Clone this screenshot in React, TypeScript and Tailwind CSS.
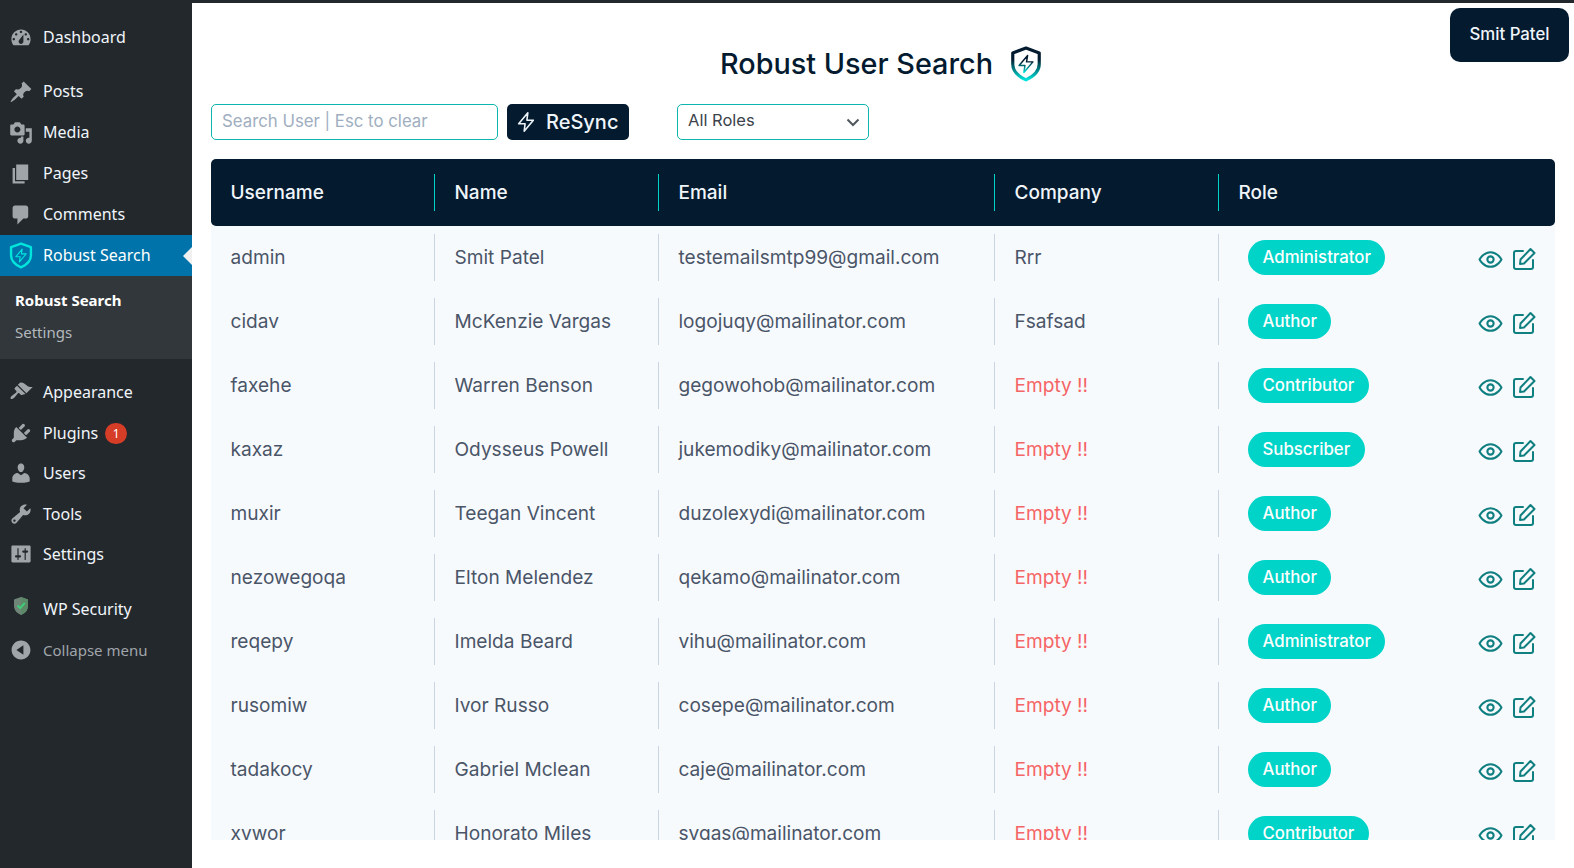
import React from 'react';

const DASHICONS: Record<string, string> = {
  dashboard:
    'M3.76 16h12.48c1.1-1.37 1.76-3.11 1.76-5 0-4.42-3.58-8-8-8s-8 3.58-8 8c0 1.89.66 3.63 1.76 5zM10 4c.55 0 1 .45 1 1s-.45 1-1 1-1-.45-1-1 .45-1 1-1zM6 6c.55 0 1 .45 1 1s-.45 1-1 1-1-.45-1-1 .45-1 1-1zm8 0c.55 0 1 .45 1 1s-.45 1-1 1-1-.45-1-1 .45-1 1-1zm-5.37 5.55L12 7v6c0 1.1-.9 2-2 2s-2-.9-2-2c0-.57.24-1.08.63-1.45zM4 10c.55 0 1 .45 1 1s-.45 1-1 1-1-.45-1-1 .45-1 1-1zm12 0c.55 0 1 .45 1 1s-.45 1-1 1-1-.45-1-1 .45-1 1-1z',
  pin: 'M10.44 3.02l1.82-1.82 6.36 6.35-1.83 1.82c-1.05-.68-2.48-.57-3.41.36l-.75.75c-.92.93-1.04 2.35-.35 3.41l-1.83 1.82-2.41-2.41-2.8 2.79c-.42.42-3.38 2.71-3.8 2.29s1.86-3.39 2.28-3.81l2.79-2.79L4.1 9.36l1.83-1.82c1.05.69 2.48.57 3.4-.36l.75-.75c.93-.92 1.05-2.35.36-3.41z',
  media:
    'M13 11V4c0-.55-.45-1-1-1h-1.67L9 1H5L3.67 3H2c-.55 0-1 .45-1 1v7c0 .55.45 1 1 1h10c.55 0 1-.45 1-1zM7 4.5c1.38 0 2.5 1.12 2.5 2.5S8.38 9.5 7 9.5 4.5 8.38 4.5 7 5.62 4.5 7 4.5zM14 6h5v10.5c0 1.38-1.12 2.5-2.5 2.5S14 17.88 14 16.5s1.12-2.5 2.5-2.5c.17 0 .34.02.5.05V9h-3V6zm-4 8.05V13h2v3.5c0 1.38-1.12 2.5-2.5 2.5S7 17.88 7 16.5 8.12 14 9.5 14c.17 0 .34.02.5.05z',
  page: 'M6 15V2h10v13H6zm-1 1h8v2H3V5h2v11z',
  comments: 'M5 2h9c1.1 0 2 .9 2 2v7c0 1.1-.9 2-2 2h-2l-5 5v-5H5c-1.1 0-2-.9-2-2V4c0-1.1.9-2 2-2z',
  appearance:
    'M14.48 11.06L7.41 3.99l1.5-1.5c.5-.56 2.3-.47 3.51.32 1.21.8 1.43 1.28 2.91 2.1 1.18.64 2.45 1.26 4.45.85zm-.71.71L6.7 4.7 4.93 6.47c-.39.39-.39 1.02 0 1.41l1.06 1.06c.39.39.39 1.03 0 1.42-.6.6-1.43 1.11-2.21 1.69-.35.26-.7.53-1.01.84C1.43 13.71.96 15.12 1.5 15.66c.54.54 1.95.07 3.29-1.27.31-.31.58-.66.84-1.01.58-.78 1.09-1.61 1.69-2.21.39-.39 1.03-.39 1.42 0l1.06 1.06c.39.39 1.02.39 1.41 0z',
  plugins:
    'M13.11 4.36L9.87 7.6 8 5.73l3.24-3.24c.35-.34 1.05-.2 1.56.32.52.51.66 1.21.31 1.55zm-8 1.77l.91-1.12 9.01 9.01-1.19.84c-.71.71-2.63 1.16-3.82 1.16H6.14L4.9 17.26c-.59.59-1.54.59-2.12 0-.59-.58-.59-1.53 0-2.12l1.24-1.24v-3.88c0-1.13.4-3.19 1.09-3.89zm7.26 3.97l3.24-3.24c.34-.35 1.04-.21 1.55.31.52.51.66 1.21.31 1.55l-3.24 3.25z',
  users:
    'M10 9.25c-2.27 0-2.73-3.44-2.73-3.44C7 4.02 7.82 2 9.97 2c2.16 0 2.98 2.02 2.71 3.81 0 0-.41 3.44-2.68 3.44zm0 2.57L12.72 10c2.39 0 4.52 2.33 4.52 4.53v2.49s-3.65 1.13-7.24 1.13c-3.65 0-7.24-1.13-7.24-1.13v-2.49c0-2.25 1.94-4.48 4.47-4.48z',
  tools:
    'M16.68 9.77c-1.34 1.34-3.3 1.67-4.95.99l-5.41 6.52c-.99.99-2.59.99-3.58 0s-.99-2.59 0-3.57l6.52-5.42c-.68-1.65-.35-3.61.99-4.95 1.28-1.28 3.12-1.62 4.72-1.06l-2.89 2.89 2.82 2.82 2.86-2.87c.53 1.58.18 3.39-1.08 4.65zM3.81 16.21c.4.39 1.04.39 1.43 0 .4-.4.4-1.04 0-1.43-.39-.4-1.03-.4-1.43 0-.39.39-.39 1.03 0 1.43z',
  settings:
    'M18 16V4c0-.55-.45-1-1-1H3c-.55 0-1 .45-1 1v12c0 .55.45 1 1 1h14c.55 0 1-.45 1-1zM8 11h1c.55 0 1 .45 1 1s-.45 1-1 1H8v1.5c0 .28-.22.5-.5.5s-.5-.22-.5-.5V13H6c-.55 0-1-.45-1-1s.45-1 1-1h1V5.5c0-.28.22-.5.5-.5s.5.22.5.5V11zm5-2h-1c-.55 0-1-.45-1-1s.45-1 1-1h1V5.5c0-.28.22-.5.5-.5s.5.22.5.5V7h1c.55 0 1 .45 1 1s-.45 1-1 1h-1v5.5c0 .28-.22.5-.5.5s-.5-.22-.5-.5V9z',
  collapse:
    'M10 2.16c4.33 0 7.84 3.51 7.84 7.84s-3.51 7.84-7.84 7.84S2.16 14.33 2.16 10 5.71 2.16 10 2.16zm2 11.72V6.12L6.18 9.97z',
};

const USERS = [
  { username: 'admin', name: 'Smit Patel', email: 'testemailsmtp99@gmail.com', company: 'Rrr', role: 'Administrator' },
  { username: 'cidav', name: 'McKenzie Vargas', email: 'logojuqy@mailinator.com', company: 'Fsafsad', role: 'Author' },
  { username: 'faxehe', name: 'Warren Benson', email: 'gegowohob@mailinator.com', company: '', role: 'Contributor' },
  { username: 'kaxaz', name: 'Odysseus Powell', email: 'jukemodiky@mailinator.com', company: '', role: 'Subscriber' },
  { username: 'muxir', name: 'Teegan Vincent', email: 'duzolexydi@mailinator.com', company: '', role: 'Author' },
  { username: 'nezowegoqa', name: 'Elton Melendez', email: 'qekamo@mailinator.com', company: '', role: 'Author' },
  { username: 'reqepy', name: 'Imelda Beard', email: 'vihu@mailinator.com', company: '', role: 'Administrator' },
  { username: 'rusomiw', name: 'Ivor Russo', email: 'cosepe@mailinator.com', company: '', role: 'Author' },
  { username: 'tadakocy', name: 'Gabriel Mclean', email: 'caje@mailinator.com', company: '', role: 'Author' },
  { username: 'xvwor', name: 'Honorato Miles', email: 'svgas@mailinator.com', company: '', role: 'Contributor' },
];

const Dashicon = ({ name }: { name: string }) => (
  <svg viewBox="0 0 20 20" className="h-[24px] w-[24px] fill-[#a0a5aa]">
    <path fillRule="evenodd" d={DASHICONS[name]} />
  </svg>
);

const Shield = ({ id, top, bottom, className }: { id: string; top: string; bottom: string; className: string }) => (
  <svg viewBox="0 0 30 34" className={className} fill="none">
    <defs>
      <linearGradient id={id} x1="0" y1="0" x2="0" y2="1">
        <stop offset="0.35" stopColor={top} />
        <stop offset="1" stopColor={bottom} />
      </linearGradient>
    </defs>
    <path
      d="M15 2 L27.5 6.5 V17 C27.5 24 21.5 29 15 32 C8.5 29 2.5 24 2.5 17 V6.5 Z"
      stroke={`url(#${id})`}
      strokeWidth="3"
      strokeLinejoin="round"
    />
    <path
      d="M16.5 9 L8.5 18.5 H14 L13 25 L21.5 15 H15.5 Z"
      stroke={`url(#${id})`}
      strokeWidth="1.4"
      strokeLinejoin="round"
    />
  </svg>
);

const MenuItem = ({ icon, label, tall, children }: { icon: string; label: string; tall?: boolean; children?: React.ReactNode }) => (
  <div className={tall ? 'flex h-[41px] items-center text-[16px] text-[#f0f5fa]' : 'flex h-[40.5px] items-center text-[16px] text-[#f0f5fa]'}>
    <span className="ml-[9px] flex w-[34px] shrink-0">
      <Dashicon name={icon} />
    </span>
    <span className={tall ? 'mb-[2px]' : ''}>{label}</span>
    {children}
  </div>
);

const Sidebar = () => (
  <aside className="w-[192px] shrink-0 bg-[#23282d] pt-[17px] font-['Noto_Sans',sans-serif]">
    <MenuItem tall icon="dashboard" label="Dashboard" />
    <div className="h-[13px]" />
    <MenuItem tall icon="pin" label="Posts" />
    <MenuItem tall icon="media" label="Media" />
    <MenuItem tall icon="page" label="Pages" />
    <MenuItem tall icon="comments" label="Comments" />
    <div className="relative flex h-[41px] items-center bg-[#0073aa] text-[16px] text-white">
      <span className="ml-[9px] flex w-[34px] shrink-0">
        <Shield id="side-shield" top="#00e5dc" bottom="#00e5dc" className="h-[27px] w-[24px]" />
      </span>
      <span className="mb-[2px]">Robust Search</span>
      <span className="absolute right-0 top-1/2 -translate-y-1/2 border-y-[9px] border-r-[9px] border-y-transparent border-r-[#f1f1f1]" />
    </div>
    <div className="flex h-[83px] flex-col bg-[#32373c] pl-[15px] pt-[8px] text-[15px]">
      <div className="flex h-[32px] items-center font-bold text-white">Robust Search</div>
      <div className="flex h-[32px] items-center text-[#b4b9be]">Settings</div>
    </div>
    <div className="h-[13px]" />
    <MenuItem icon="appearance" label="Appearance" />
    <MenuItem icon="plugins" label="Plugins">
      <span className="ml-[7px] mt-[2px] flex h-[21px] w-[22px] items-center justify-center rounded-full bg-[#d63d26] text-[12px] text-white">
        1
      </span>
    </MenuItem>
    <MenuItem icon="users" label="Users" />
    <MenuItem icon="tools" label="Tools" />
    <MenuItem icon="settings" label="Settings" />
    <div className="h-[14px]" />
    <div className="flex h-[41.5px] items-center text-[16px] text-[#f0f5fa]">
      <span className="ml-[13px] mb-[6px] flex w-[30px] shrink-0">
        <svg viewBox="0 0 16 20" className="h-[22px] w-[16px]">
          <path d="M8 1 L15 3.5 V10 C15 14.5 11.5 17.5 8 19 C4.5 17.5 1 14.5 1 10 V3.5 Z" fill="#6f8577" />
          <path d="M8 1 L15 3.5 V10 C15 14.5 11.5 17.5 8 19 Z" fill="#5c8a68" />
          <path d="M4.5 9.5 L7.2 12.2 L11.8 6.8" stroke="#3fd07a" strokeWidth="1.8" fill="none" />
        </svg>
      </span>
      WP Security
    </div>
    <div className="flex h-[40.8px] items-center text-[15px] text-[#a0a5aa]">
      <span className="ml-[9px] flex w-[34px] shrink-0">
        <Dashicon name="collapse" />
      </span>
      Collapse menu
    </div>
  </aside>
);

const HEADERS = ['Username', 'Name', 'Email', 'Company', 'Role'];

const UserRow = ({ user }: { user: (typeof USERS)[number] }) => {
  const cell = 'my-2 -ml-px flex h-[47px] items-center border-l border-[#cbd5e0] pb-[2px] pl-[19.5px]';
  return (
    <div className="grid h-[64px] shrink-0 grid-cols-[2fr_2fr_3fr_2fr_3fr] text-[19.1px] leading-[28px] text-[#4a5568]">
      <div className="my-2 flex h-[47px] items-center pb-[2px] pl-[19.5px]">{user.username}</div>
      <div className={cell}>{user.name}</div>
      <div className={cell}>{user.email}</div>
      <div className={cell}>
        {user.company ? user.company : <span className="text-[#f56565]">Empty !!</span>}
      </div>
      <div className="my-2 -ml-px flex h-[47px] items-center justify-between border-l border-[#cbd5e0] pl-[29px] pr-[19px]">
        <span className="mb-px flex h-[35px] items-center rounded-full bg-[#00d4c8] px-[14.5px] pb-px text-[16.8px] font-medium text-white">
          {user.role}
        </span>
        <span className="mt-[3px] flex items-center gap-[9px] text-[#0f7f80]">
          <svg viewBox="0 0 24 24" className="h-[25px] w-[25px]" fill="none" stroke="currentColor" strokeWidth="2">
            <path d="M1.5 12s3.8-7 10.5-7 10.5 7 10.5 7-3.8 7-10.5 7-10.5-7-10.5-7z" strokeLinejoin="round" />
            <circle cx="12" cy="12" r="3" />
          </svg>
          <svg viewBox="0 0 24 24" className="h-[24px] w-[24px]" fill="none" stroke="currentColor" strokeWidth="2" strokeLinecap="round" strokeLinejoin="round">
            <path d="M11 4H4a2 2 0 0 0-2 2v14a2 2 0 0 0 2 2h15a2 2 0 0 0 2-2v-7" />
            <path d="M18.5 2 L22.5 6 L12 16.5 L8 17 L8.5 12.5 Z" />
          </svg>
        </span>
      </div>
    </div>
  );
};

export default function App() {
  return (
    <div className="flex h-[868px] w-[1574px] overflow-hidden bg-white font-['Inter',sans-serif]">
      <Sidebar />
      <main className="relative flex min-w-0 flex-1 flex-col border-t-[3px] border-[#23282d] pb-[28px] pl-[19px] pr-[19px]">
        <div className="absolute right-[5px] top-[5px] flex h-[54px] w-[119px] items-center justify-center rounded-[10px] bg-[#031a2f] pb-px text-[16.8px] font-medium text-[#f0f5fa]">
          Smit Patel
        </div>
        <div className="mr-[4px] mt-[39px] flex h-[44px] items-center justify-center gap-[17px]">
          <h1 className="text-[28.8px] font-medium leading-none text-[#031a2f]">Robust User Search</h1>
          <Shield id="title-shield" top="#031a2f" bottom="#00e5dc" className="h-[36px] w-[32px]" />
        </div>
        <div className="mt-[18px] flex h-[36px] items-stretch">
          <input
            placeholder="Search User | Esc to clear"
            className="w-[287px] rounded-[5px] border border-[#0cb5ad] bg-white px-[10px] pb-px text-[16.8px] outline-none placeholder:text-[#a0aec0]"
          />
          <button className="ml-[9px] flex w-[122px] items-center gap-[9px] rounded-[5px] bg-[#031a2f] pl-[8px] text-[20px] font-medium text-[#f0f5fa]">
            <svg viewBox="0 0 24 24" className="h-[22px] w-[22px]" fill="none" stroke="currentColor" strokeWidth="1.7" strokeLinejoin="round">
              <path d="M14 2 L4 14 H11 L10 22 L20 10 H13 Z" />
            </svg>
            ReSync
          </button>
          <div className="relative ml-[48px] w-[192px]">
            <select className="h-full w-full appearance-none rounded-[5px] border border-[#0cb5ad] bg-white px-[10px] pb-[3px] text-[16.5px] text-[#3c434a] outline-none">
              <option>All Roles</option>
            </select>
            <svg viewBox="0 0 16 16" className="pointer-events-none absolute right-[8px] top-[10px] h-[16px] w-[16px]" fill="none" stroke="#50575e" strokeWidth="2">
              <path d="M2.5 5.5 L8 11 L13.5 5.5" />
            </svg>
          </div>
        </div>
        <div className="mt-[19px] grid h-[67px] shrink-0 grid-cols-[2fr_2fr_3fr_2fr_3fr] rounded-[5px] bg-[#031a2f] text-[19px] font-medium text-[#f0f5fa]">
          {HEADERS.map((label, i) => (
            <div key={label} className="flex items-center">
              <div className={i === 0 ? 'flex h-[37px] items-center pl-[19.5px] pt-[2px]' : '-ml-px flex h-[37px] items-center border-l border-[#00d4c8] pl-[19.5px] pt-[2px]'}>
                {label}
              </div>
            </div>
          ))}
        </div>
        <div className="flex min-h-0 flex-1 flex-col overflow-hidden bg-[#f7fafd]">
          {USERS.map((user) => (
            <UserRow key={user.username} user={user} />
          ))}
        </div>
      </main>
    </div>
  );
}
